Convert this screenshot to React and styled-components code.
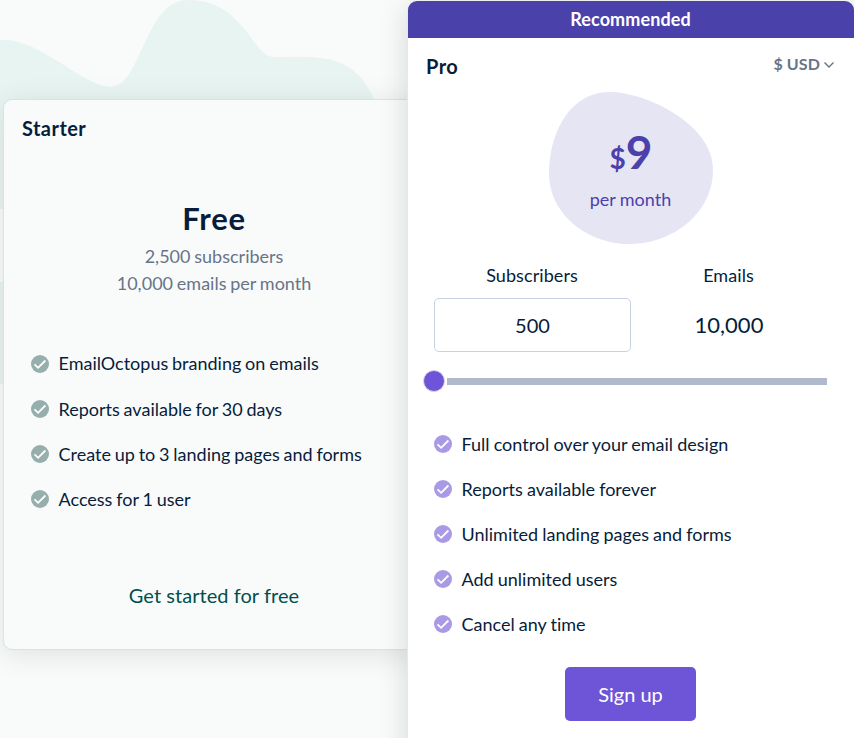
import React from 'react';
import styled, { createGlobalStyle } from 'styled-components';

const GlobalStyle = createGlobalStyle`
  * { box-sizing: border-box; }
  body {
    margin: 0;
    overflow: hidden;
    background: #f9fbfa;
    color: #071d3b;
    font: 400 18px/27px Lato, "Open Sans", sans-serif;
    font-variant-ligatures: none;
  }
  h2, p, ul { margin: 0; padding: 0; }
  ul { list-style: none; }
`;

const Page = styled.main`
  position: relative;
  display: grid;
  grid-template-columns: 404px 447px;
  align-items: start;
  width: 854px;
  height: 738px;
  padding-left: 3px;
  overflow: hidden;
`;

const Waves = styled.svg`
  position: absolute;
  inset: 0;
  width: 854px;
  height: 738px;
`;

const Card = styled.section`
  position: relative;
  display: flex;
  flex-direction: column;
  box-shadow: 0 5px 30px rgba(0, 0, 0, 0.14);
`;

const StarterCard = styled(Card)`
  width: 422px;
  height: 551px;
  margin-top: 99px;
  padding: 15px 18px 0;
  border: 1px solid #d0e8e1;
  border-radius: 9px;
  background: #f9fbfa;
  box-shadow: 0 5px 30px rgba(0, 0, 0, 0.1);
`;

const ProCard = styled(Card)`
  height: 780px;
  margin-top: 1px;
  border-left: 1px solid #e6e5f4;
  border-radius: 10px 10px 0 0;
  background: #fff;
`;

const Banner = styled.div`
  height: 37px;
  padding-right: 1px;
  border-radius: 9px 9px 0 0;
  background: #4b41ab;
  color: #fff;
  font-weight: 700;
  letter-spacing: 0.1px;
  line-height: 37px;
  text-align: center;
`;

const ProBody = styled.div`
  display: flex;
  flex-direction: column;
  padding: 15px 19px 0 18px;
`;

const Heading = styled.header`
  display: flex;
  justify-content: space-between;
`;

const PlanName = styled.h2`
  font-size: 20px;
  font-weight: 700;
  letter-spacing: 0.45px;
  line-height: 27px;
`;

const Currency = styled.button`
  display: flex;
  align-items: center;
  gap: 3px;
  height: 21px;
  padding: 0;
  border: 0;
  background: none;
  color: #677489;
  font: 700 16px/21px Lato, sans-serif;
  letter-spacing: 0.1px;
  svg { margin-top: 3px; }
`;

const FreeOffer = styled.div`
  margin-top: 56px;
  color: #677489;
  text-align: center;
  word-spacing: -0.8px;
`;

const FreePrice = styled.p`
  margin-bottom: 5px;
  color: #071d3b;
  font-size: 31px;
  font-weight: 700;
  letter-spacing: 0.7px;
  line-height: 40px;
`;

const Features = styled.ul`
  display: flex;
  flex-direction: column;
  gap: 18px;
  margin-top: ${({ $top }) => $top}px;
  padding-left: ${({ $indent }) => $indent}px;
  word-spacing: ${({ $wordSpacing }) => $wordSpacing}px;
`;

const Feature = styled.li`
  display: flex;
  align-items: center;
  gap: 9.5px;
  height: 27px;
  svg {
    flex: none;
    margin-bottom: 2px;
    color: ${({ $color }) => $color};
  }
`;

const StarterFeatures = styled.div`
  li:first-child span { margin-bottom: 2px; }
`;

const StartLink = styled.a`
  margin-top: 69px;
  color: #004f4f;
  font-size: 20px;
  letter-spacing: 0.05px;
  text-align: center;
`;

const PriceBlob = styled.div`
  position: relative;
  align-self: center;
  width: 164px;
  height: 152px;
  margin-top: 12px;
  padding-top: 33px;
  color: #4b41ab;
  text-align: center;
`;

const BlobShape = styled.svg`
  position: absolute;
  inset: 0;
`;

const Price = styled.p`
  position: relative;
  height: 61px;
  padding-left: 1px;
  font-size: 46px;
  font-weight: 700;
  line-height: 54px;
  small { font-size: 28px; }
`;

const Period = styled.p`
  position: relative;
  word-spacing: -0.3px;
`;

const Quantities = styled.div`
  display: grid;
  grid-template-columns: 197px 196px;
  margin: 18px 0 0 8px;
  text-align: center;
`;

const Quantity = styled.label`
  display: flex;
  flex-direction: column;
  gap: 9px;
`;

const QuantityName = styled.span`
  padding-right: 1px;
  letter-spacing: 0.08px;
`;

const amountStyles = `
  width: 100%;
  height: 54px;
  color: #071d3b;
  font: 400 20px/54px Lato, sans-serif;
  text-align: center;
`;

const AmountInput = styled.input`
  ${amountStyles}
  padding: 0;
  border: 1px solid #c8d1e2;
  border-radius: 5px;
  background: #fff;
`;

const Amount = styled.output`
  ${amountStyles}
  font-size: 22px;
`;

const Slider = styled.div`
  display: flex;
  align-items: center;
  height: 22px;
  margin: 18px 8px 0 -3px;
`;

const Thumb = styled.span`
  width: 22px;
  height: 22px;
  border: 1px solid #d9d1f5;
  border-radius: 50%;
  background: #6e55d7;
`;

const Track = styled.span`
  flex: 1;
  height: 7px;
  margin-left: 2px;
  background: #b0bacc;
`;

const SignUp = styled.button`
  align-self: center;
  width: 131px;
  height: 54px;
  margin-top: 29px;
  padding: 0;
  border: 0;
  border-radius: 5px;
  background: #6e55d7;
  color: #fff;
  font: 400 20px/54px Lato, sans-serif;
`;

const CheckIcon = () => (
  <svg width="18" height="18" viewBox="0 0 18 18">
    <circle cx="9" cy="9" r="9" fill="currentColor" />
    <path d="M3.5 9.3 7.1 12.8 14.4 5.5" fill="none" stroke="#fff" strokeWidth="1.8" />
  </svg>
);

const FeatureList = ({ items, color, top, indent, wordSpacing }) => (
  <Features $top={top} $indent={indent} $wordSpacing={wordSpacing}>
    {items.map((item) => (
      <Feature key={item} $color={color}><CheckIcon /><span>{item}</span></Feature>
    ))}
  </Features>
);

const starterFeatures = [
  'EmailOctopus branding on emails',
  'Reports available for 30 days',
  'Create up to 3 landing pages and forms',
  'Access for 1 user',
];

const proFeatures = [
  'Full control over your email design',
  'Reports available forever',
  'Unlimited landing pages and forms',
  'Add unlimited users',
  'Cancel any time',
];

export default function App() {
  return (
    <>
      <GlobalStyle />
      <Page>
        <Waves viewBox="0 0 854 738" aria-hidden="true">
          <path
            d="M0 40C38 37 84 87 110 87C142 87 144 0 188 0C245 0 252 57 274 57C319 57 353 52 374 99V384H0V282H3V209H0Z"
            fill="#e8f4f1"
          />
        </Waves>
        <StarterCard>
          <PlanName>Starter</PlanName>
          <FreeOffer>
            <FreePrice>Free</FreePrice>
            <p>2,500 subscribers</p>
            <p>10,000 emails per month</p>
          </FreeOffer>
          <StarterFeatures>
            <FeatureList items={starterFeatures} color="#96afac" top={54} indent={9} wordSpacing={-0.8} />
          </StarterFeatures>
          <StartLink>Get started for free</StartLink>
        </StarterCard>
        <ProCard>
          <Banner>Recommended</Banner>
          <ProBody>
            <Heading>
              <PlanName>Pro</PlanName>
              <Currency>
                $ USD
                <svg width="12" height="8" viewBox="0 0 12 8">
                  <path d="M1.5 1.5 6 6 10.5 1.5" fill="none" stroke="currentColor" strokeWidth="1.4" />
                </svg>
              </Currency>
            </Heading>
            <PriceBlob>
              <BlobShape width="164" height="152" viewBox="0 0 164 152" aria-hidden="true">
                <path
                  d="M61 0C95 0 164 31 164 78C164 119 126 152 80 152C39 152 0 123 0 81C0 44 19 0 61 0Z"
                  fill="#e6e5f4"
                />
              </BlobShape>
              <Price><small>$</small>9</Price>
              <Period>per month</Period>
            </PriceBlob>
            <Quantities>
              <Quantity><QuantityName>Subscribers</QuantityName><AmountInput defaultValue="500" /></Quantity>
              <Quantity><QuantityName>Emails</QuantityName><Amount>10,000</Amount></Quantity>
            </Quantities>
            <Slider><Thumb /><Track /></Slider>
            <FeatureList items={proFeatures} color="#aa9ae6" top={39} indent={8} wordSpacing={-0.5} />
            <SignUp>Sign up</SignUp>
          </ProBody>
        </ProCard>
      </Page>
    </>
  );
}
